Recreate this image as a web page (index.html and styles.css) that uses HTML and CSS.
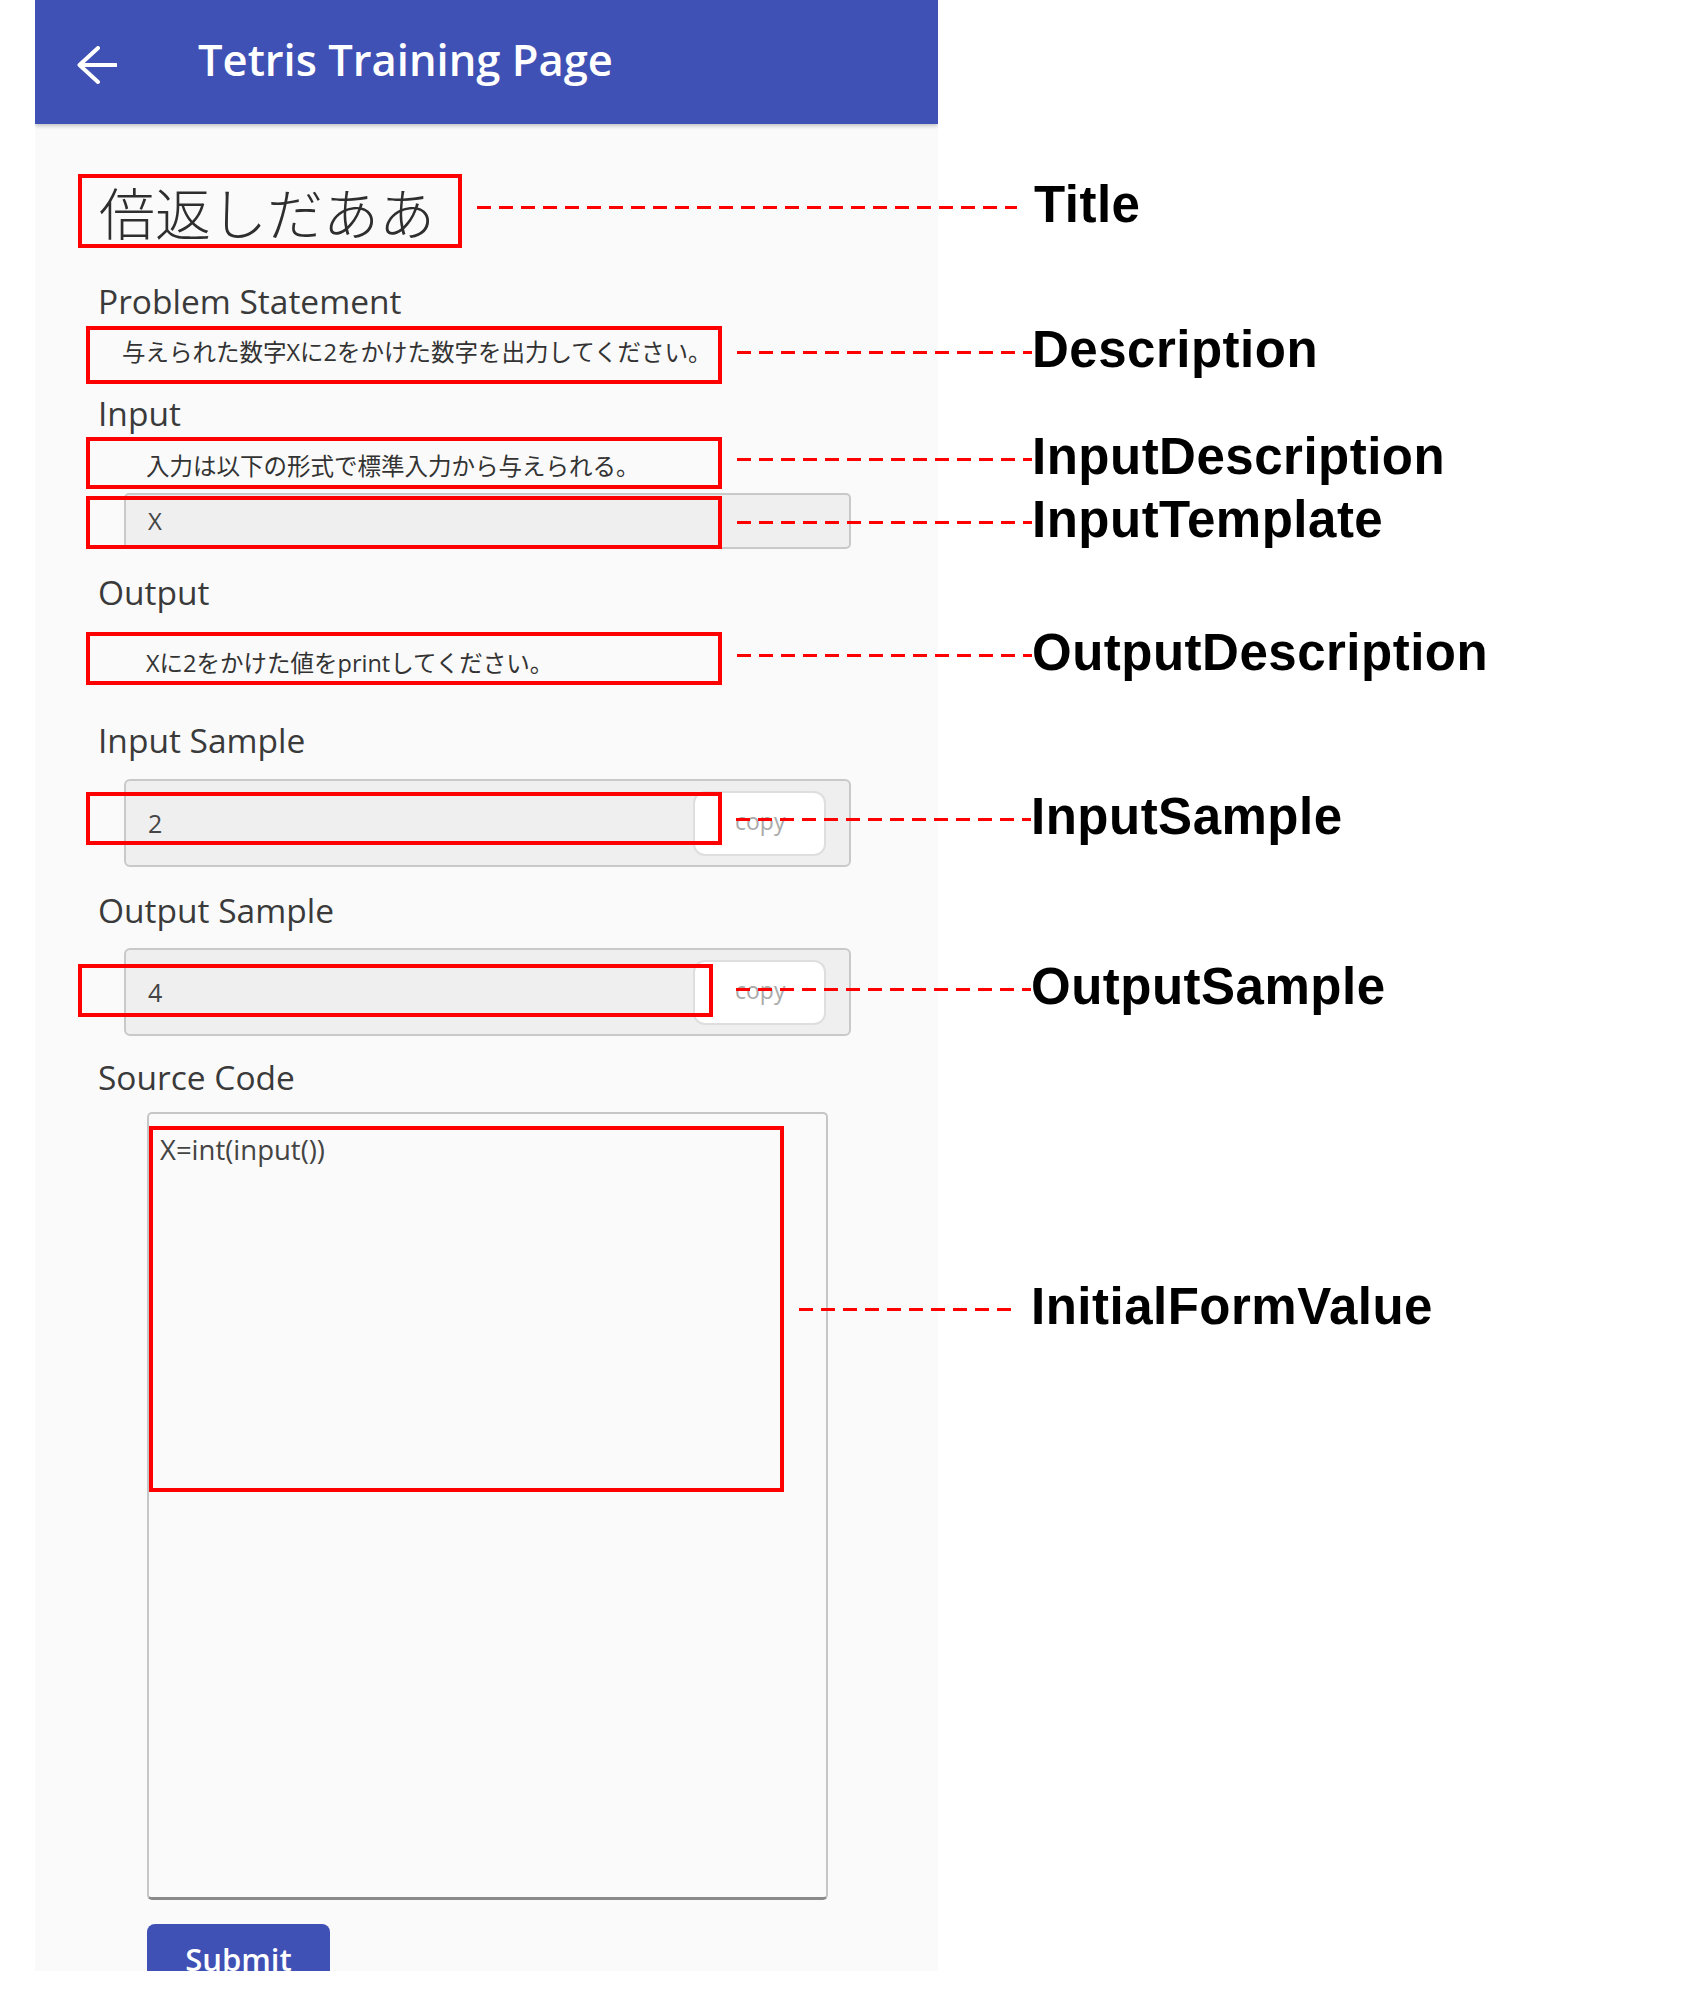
FILE: index.html
```html
<!DOCTYPE html>
<html lang="ja">
<head>
<meta charset="utf-8">
<title>Tetris Training Page</title>
<link rel="stylesheet" href="styles.css">
</head>
<body>
<div class="canvas">
  <div class="app">
    <header class="appbar">
      <svg class="back" viewBox="0 0 40 40" aria-hidden="true"><path d="M39 19H3M21 2L2.5 19L21 36" fill="none" stroke="#fff" stroke-width="4" stroke-linecap="round" stroke-linejoin="round"/></svg>
      <h1 class="appbar-title">Tetris Training Page</h1>
    </header>
    <main class="content">
      <h2 class="problem-title">倍返しだああ</h2>

      <h3 class="label label-first">Problem Statement</h3>
      <p class="desc desc-statement">与えられた数字Xに2をかけた数字を出力してください。</p>

      <h3 class="label label-input">Input</h3>
      <p class="desc desc-input">入力は以下の形式で標準入力から与えられる。</p>
      <div class="template">X</div>

      <h3 class="label label-output">Output</h3>
      <p class="desc desc-output">Xに2をかけた値をprintしてください。</p>

      <h3 class="label label-insample">Input Sample</h3>
      <div class="sample sample-in"><span class="sample-text">2</span><button class="copy">copy</button></div>

      <h3 class="label label-outsample">Output Sample</h3>
      <div class="sample sample-out"><span class="sample-text">4</span><button class="copy">copy</button></div>

      <h3 class="label label-source">Source Code</h3>
      <textarea class="code" spellcheck="false">X=int(input())</textarea>

      <button class="submit">Submit</button>
    </main>
  </div>

  <div class="ring ring-title"></div>
  <div class="ring ring-desc"></div>
  <div class="ring ring-indesc"></div>
  <div class="ring ring-template"></div>
  <div class="ring ring-outdesc"></div>
  <div class="ring ring-insample"></div>
  <div class="ring ring-outsample"></div>
  <div class="ring ring-initial"></div>

  <div class="note note-title"><span class="dash dash-title"></span><span class="note-label gap">Title</span></div>
  <div class="note note-desc"><span class="dash"></span><span class="note-label">Description</span></div>
  <div class="note note-indesc"><span class="dash"></span><span class="note-label">InputDescription</span></div>
  <div class="note note-template"><span class="dash"></span><span class="note-label">InputTemplate</span></div>
  <div class="note note-outdesc"><span class="dash"></span><span class="note-label">OutputDescription</span></div>
  <div class="note note-insample"><span class="dash"></span><span class="note-label">InputSample</span></div>
  <div class="note note-outsample"><span class="dash"></span><span class="note-label">OutputSample</span></div>
  <div class="note note-initial"><span class="dash dash-initial"></span><span class="note-label gap-initial">InitialFormValue</span></div>
</div>
</body>
</html>
```

FILE: styles.css
```css
* { box-sizing: border-box; }
html, body { margin: 0; padding: 0; background: #fff; }
body { font-family: "Open Sans", "Noto Sans CJK JP", sans-serif; color: #333; }

.canvas { position: relative; width: 1706px; height: 2010px; overflow: hidden; background: #fff; }

/* ---------- app panel ---------- */
.app { margin-left: 35px; width: 903px; height: 1971px; background: #fafafa; overflow: hidden; }

.appbar {
  height: 124px; background: #3f51b5; display: flex; align-items: center;
  padding-left: 42px; box-shadow: 0 2px 4px rgba(0,0,0,.22); position: relative;
}
.back { width: 40px; height: 40px; flex: none; margin-top: 8px; }
.appbar-title {
  margin: 0 0 0 81px; padding-bottom: 5px;
  font: 600 43.5px/60px "Open Sans", sans-serif; color: #fff;
}

.content { display: flex; flex-direction: column; align-items: flex-start; padding-left: 63px; }

.problem-title {
  margin: 53px 0 0 1px; height: 67px;
  font: 300 56px/67px "Noto Sans CJK JP", sans-serif; color: #2e2e2e;
}

.label {
  margin: 0; height: 40px;
  font: 400 33.5px/40px "Open Sans", sans-serif; color: #3a3a3a;
}
.label-first { margin-top: 37px; }
.label-input { margin-top: 26px; }
.label-output { margin-top: 23px; }
.label-insample { margin-top: 42px; }
.label-outsample { margin-top: 23px; }
.label-source { margin-top: 21px; }

.desc {
  margin: 0; height: 30px; white-space: nowrap;
  font: 400 23.5px/30px "Open Sans", "Noto Sans CJK JP", sans-serif; color: #333;
}
.desc-statement { margin-top: 16px; margin-left: 24px; }
.desc-input { margin-top: 18px; margin-left: 48px; }
.desc-output { margin-top: 36px; margin-left: 48px; }

.template {
  margin: 12px 0 0 26px; width: 727px; height: 56px;
  display: flex; align-items: center; padding-left: 22px;
  background: #efefef; border: 2px solid #c9c9c9; border-radius: 5px;
  font: 400 24px/1 "Open Sans", sans-serif; color: #444;
}

.sample {
  width: 727px; height: 88px; margin-left: 26px;
  display: flex; align-items: center; justify-content: space-between;
  padding: 0 23px 0 22px;
  background: #efefef; border: 2px solid #c9c9c9; border-radius: 6px;
}
.sample-in { margin-top: 19px; }
.sample-out { margin-top: 18px; }
.sample-text { font: 400 25px/1 "Open Sans", sans-serif; color: #444; }
.copy {
  width: 133px; height: 65px; padding: 0 0 4px 40px; text-align: left;
  background: #fff; border: 2px solid #dedede; border-radius: 12px;
  font: 400 23px/1 "Open Sans", sans-serif; color: #a9a9a9;
}

.code {
  display: block; margin: 15px 0 0 49px; width: 681px; height: 788px;
  padding: 18px 11px; resize: none; outline: none;
  background: #fafafa; border: 2px solid #c6c6c6; border-bottom: 3px solid #8a8a8a; border-radius: 5px;
  font: 400 27.5px/36px "Open Sans", sans-serif; color: #444;
}

.submit {
  margin: 24px 0 0 49px; width: 183px; height: 70px; padding: 0;
  background: #3f51b5; border: none; border-radius: 8px;
  font: 600 31px/1 "Open Sans", sans-serif; color: #fff;
}

/* ---------- annotation overlays ---------- */
.ring { position: absolute; border: 4px solid #ff0000; }
.ring-title { left: 78px; top: 174px; width: 384px; height: 74px; }
.ring-desc { left: 86px; top: 326px; width: 636px; height: 58px; }
.ring-indesc { left: 86px; top: 437px; width: 636px; height: 52px; }
.ring-template { left: 86px; top: 496px; width: 636px; height: 53px; }
.ring-outdesc { left: 86px; top: 632px; width: 636px; height: 53px; }
.ring-insample { left: 86px; top: 792px; width: 636px; height: 53px; }
.ring-outsample { left: 78px; top: 964px; width: 635px; height: 53px; }
.ring-initial { left: 149px; top: 1126px; width: 635px; height: 366px; }

.note { position: absolute; display: flex; align-items: flex-start; left: 737px; }
.note-title { left: 477px; top: 180px; }
.note-desc { top: 325px; }
.note-indesc { top: 432px; }
.note-template { top: 495px; }
.note-outdesc { top: 628px; }
.note-insample { top: 792px; left: 736px; }
.note-outsample { top: 962px; left: 736px; }
.note-initial { left: 799px; top: 1282px; }

.dash {
  display: block; width: 295px; height: 3px; margin-top: 26px; flex: none;
  background: repeating-linear-gradient(90deg, #ff0000 0 14px, transparent 14px 22px);
}
.dash-title { width: 540px; }
.dash-initial { width: 218px; }

.note-label {
  font: 700 51px/50px "Liberation Sans", Arial, sans-serif; color: #000; white-space: nowrap;
  letter-spacing: 0.5px;
}
.gap { margin-left: 17px; }
.gap-initial { margin-left: 14px; }
```
